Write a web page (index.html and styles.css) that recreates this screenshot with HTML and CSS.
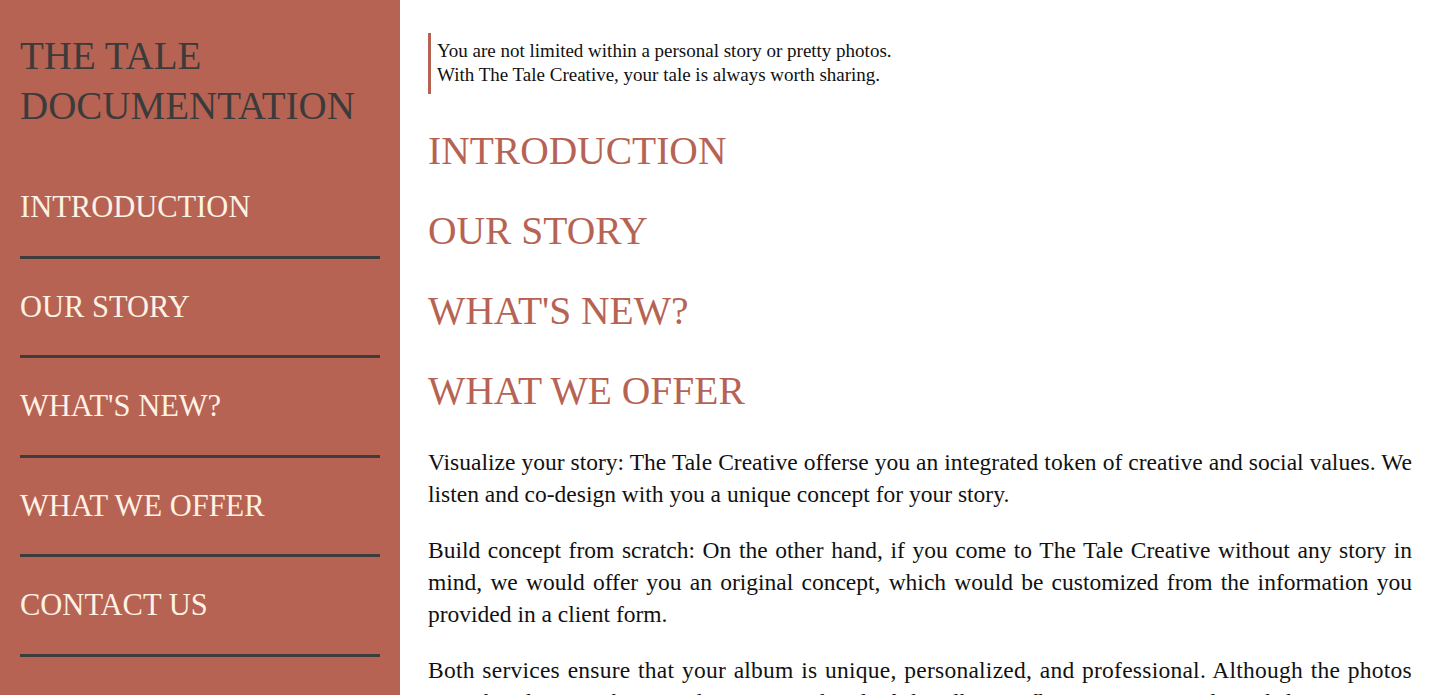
FILE: index.html
```html
<!DOCTYPE html>
<html lang="en">
<head>
<meta charset="utf-8">
<title>The Tale Documentation</title>
<link rel="stylesheet" href="styles.css">
</head>
<body>
<div class="page">
  <nav class="sidebar" id="navbar">
    <header class="brand">THE TALE DOCUMENTATION</header>
    <ul class="nav-list">
      <li><a class="nav-link" href="#introduction">INTRODUCTION</a></li>
      <li><a class="nav-link" href="#our_story">OUR STORY</a></li>
      <li><a class="nav-link" href="#whats_new">WHAT'S NEW?</a></li>
      <li><a class="nav-link" href="#what_we_offer">WHAT WE OFFER</a></li>
      <li><a class="nav-link" href="#contact_us">CONTACT US</a></li>
    </ul>
  </nav>
  <main class="main" id="main-doc">
    <blockquote class="quote">You are not limited within a personal story or pretty photos.<br>With The Tale Creative, your tale is always worth sharing.</blockquote>
    <section class="main-section" id="introduction"><header class="section-title">INTRODUCTION</header></section>
    <section class="main-section" id="our_story"><header class="section-title">OUR STORY</header></section>
    <section class="main-section" id="whats_new"><header class="section-title">WHAT'S NEW?</header></section>
    <section class="main-section" id="what_we_offer">
      <header class="section-title">WHAT WE OFFER</header>
      <p class="para"><span class="lead">Visualize your story:</span> The Tale Creative offerse you an integrated token of creative and social values. We listen and co-design with you a unique concept for your story.</p>
      <p class="para"><span class="lead">Build concept from scratch:</span> On the other hand, if you come to The Tale Creative without any story in mind, we would offer you an original concept, which would be customized from the information you provided in a client form.</p>
      <p class="para para-wide">Both services ensure that your album is unique, personalized, and professional. Although the photos are taken by our photographers, every detail of the album reflects your own tale and the memories you want to keep for a lifetime.</p>
    </section>
  </main>
</div>
</body>
</html>
```
FILE: styles.css
```css
* { box-sizing: border-box; }
html, body { margin: 0; padding: 0; }
body {
  font-family: "Liberation Serif", "Times New Roman", serif;
  color: #111;
  background: #fff;
  overflow: hidden;
}
.page {
  display: flex;
  align-items: flex-start;
  height: 695px;
  overflow: hidden;
}
.sidebar {
  flex: 0 0 400px;
  height: 695px;
  background: #b66354;
  padding: 31px 20px 0 20px;
}
.brand {
  font-size: 39px;
  line-height: 50px;
  color: #3b3b3b;
  margin-bottom: 28px;
}
.nav-list {
  list-style: none;
  margin: 0;
  padding: 0;
}
.nav-list li {
  border-bottom: 3px solid #3d3d3d;
  padding: 28px 0 28.5px;
}
.nav-link {
  display: block;
  font-size: 30.5px;
  line-height: 40px;
  color: #fdf2e4;
  text-decoration: none;
}
.main {
  flex: 1;
  padding: 33px 28px 0 28px;
}
.quote {
  margin: 0 0 32px 0;
  border-left: 3px solid #b66354;
  padding: 6px 0 7px 6px;
  font-size: 19px;
  line-height: 24px;
  color: #111;
}
.section-title {
  font-size: 39.5px;
  line-height: 50px;
  color: #b66354;
  margin-bottom: 30px;
}
.para {
  margin: 0 0 24px 0;
  font-size: 23.5px;
  line-height: 32px;
  text-align: justify;
}
.para:first-of-type { margin-top: 2px; }
.para-wide { letter-spacing: 0.25px; }
```
